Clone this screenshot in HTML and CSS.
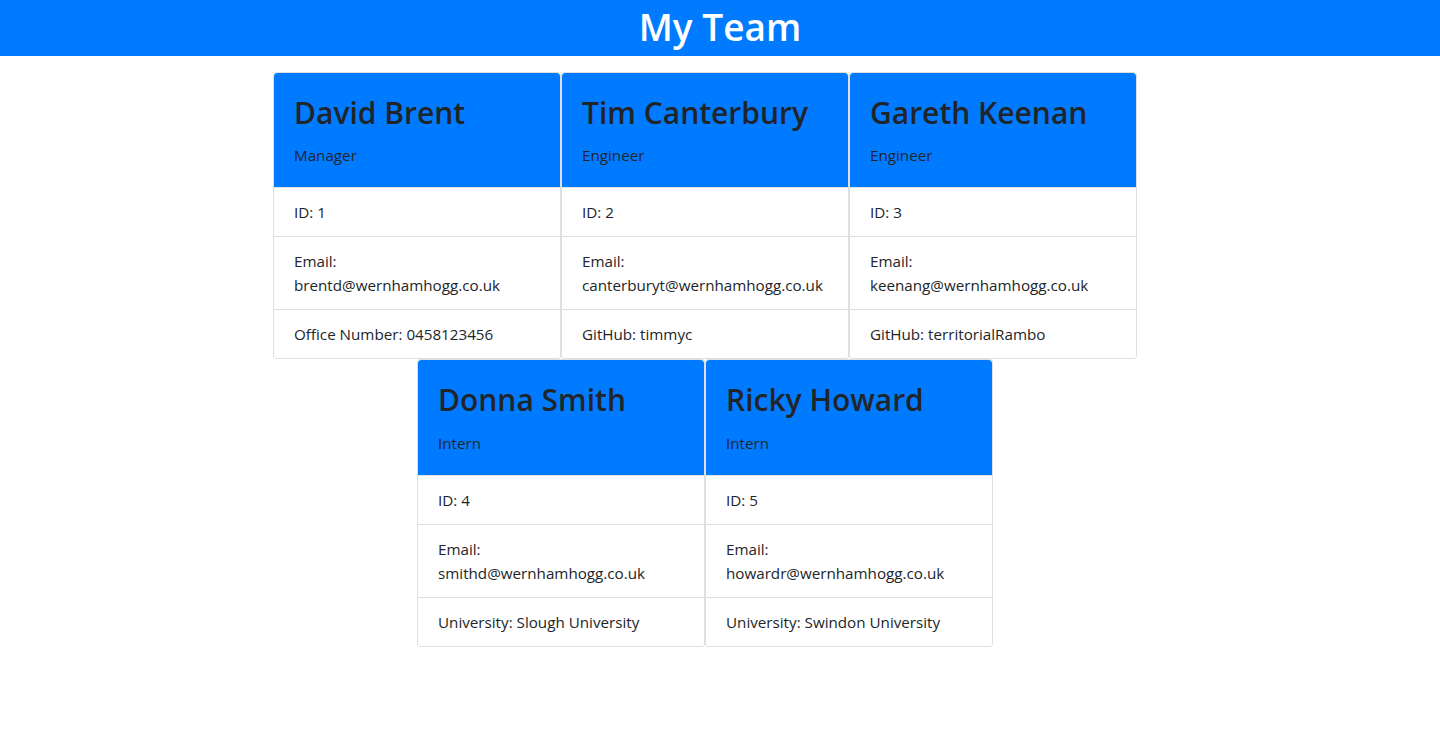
FILE: index.html
```html
<!DOCTYPE html>
<html lang="en">
<head>
<meta charset="utf-8">
<title>My Team</title>
<link rel="stylesheet" href="styles.css">
</head>
<body>
<header class="topbar">
  <h1 class="topbar-title">My Team</h1>
</header>
<main class="team">
  <div class="card">
    <div class="card-head">
      <h2 class="card-name">David Brent</h2>
      <p class="card-role">Manager</p>
    </div>
    <ul class="info-list">
      <li class="info-item">ID: 1</li>
      <li class="info-item">Email: brentd@wernhamhogg.co.uk</li>
      <li class="info-item">Office Number: 0458123456</li>
    </ul>
  </div>
  <div class="card">
    <div class="card-head">
      <h2 class="card-name">Tim Canterbury</h2>
      <p class="card-role">Engineer</p>
    </div>
    <ul class="info-list">
      <li class="info-item">ID: 2</li>
      <li class="info-item">Email: canterburyt@wernhamhogg.co.uk</li>
      <li class="info-item">GitHub: timmyc</li>
    </ul>
  </div>
  <div class="card">
    <div class="card-head">
      <h2 class="card-name">Gareth Keenan</h2>
      <p class="card-role">Engineer</p>
    </div>
    <ul class="info-list">
      <li class="info-item">ID: 3</li>
      <li class="info-item">Email: keenang@wernhamhogg.co.uk</li>
      <li class="info-item">GitHub: territorialRambo</li>
    </ul>
  </div>
  <div class="card">
    <div class="card-head">
      <h2 class="card-name">Donna Smith</h2>
      <p class="card-role">Intern</p>
    </div>
    <ul class="info-list">
      <li class="info-item">ID: 4</li>
      <li class="info-item">Email: smithd@wernhamhogg.co.uk</li>
      <li class="info-item">University: Slough University</li>
    </ul>
  </div>
  <div class="card">
    <div class="card-head">
      <h2 class="card-name">Ricky Howard</h2>
      <p class="card-role">Intern</p>
    </div>
    <ul class="info-list">
      <li class="info-item">ID: 5</li>
      <li class="info-item">Email: howardr@wernhamhogg.co.uk</li>
      <li class="info-item">University: Swindon University</li>
    </ul>
  </div>
</main>
</body>
</html>
```

FILE: styles.css
```css
* { box-sizing: border-box; }

html, body {
  margin: 0;
  padding: 0;
  background: #fff;
}

body {
  font-family: "Open Sans", "Noto Sans", "Liberation Sans", sans-serif;
  font-size: 15.2px;
  line-height: 24px;
  color: #212529;
}

.topbar {
  background: #007bff;
  height: 56px;
  padding-top: 3px;
  text-align: center;
}

.topbar-title {
  margin: 0;
  font-size: 37px;
  line-height: 48px;
  font-weight: 600;
  color: #fff;
}

.team {
  width: 930px;
  margin: 16px auto 0;
  padding-right: 30px;
  display: flex;
  flex-wrap: wrap;
  justify-content: center;
}

.card {
  width: 288px;
  border: 1px solid rgba(0, 0, 0, 0.125);
  border-radius: 4px;
  background: #fff;
  overflow: hidden;
}

.card-head {
  background: #007bff;
  padding: 20px;
  border-radius: 3px 3px 0 0;
}

.card-name {
  margin: 0 0 11px;
  padding-top: 1px;
  font-size: 30px;
  line-height: 38.4px;
  font-weight: 600;
  color: #212529;
}

.card-role {
  margin: 0;
  font-size: 15.2px;
  line-height: 24px;
  color: #212529;
}

.info-list {
  list-style: none;
  margin: 0;
  padding: 0;
}

.info-item {
  padding: 12px 20px;
  border-top: 1px solid rgba(0, 0, 0, 0.125);
  background: #fff;
}
```
